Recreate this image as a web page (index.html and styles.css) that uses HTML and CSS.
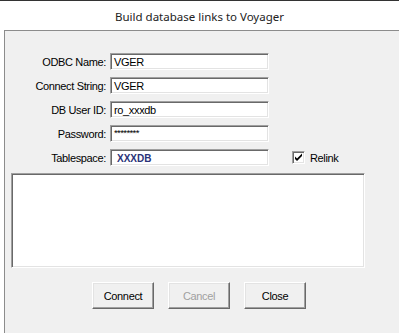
FILE: index.html
```html
<!DOCTYPE html>
<html lang="en">
<head>
    <meta charset="UTF-8">
    <title>Build database links to Voyager</title>
    <link rel="stylesheet" href="styles.css">
</head>
<body>
    <header class="titulo">Build database links to Voyager</header>
    <main class="dialogo">
        <section class="campos">
            <label class="etiqueta">ODBC Name:</label>
            <div class="caja">VGER</div>
            <span></span>
            <label class="etiqueta">Connect String:</label>
            <div class="caja">VGER</div>
            <span></span>
            <label class="etiqueta">DB User ID:</label>
            <div class="caja">ro_xxxdb</div>
            <span></span>
            <label class="etiqueta">Password:</label>
            <div class="caja clave">********</div>
            <span></span>
            <label class="etiqueta">Tablespace:</label>
            <div class="caja espacio">XXXDB</div>
            <label class="casilla">
                <span class="marca">
                    <svg width="9" height="9" viewBox="0 0 9 9">
                        <path d="M1 3.5 L3 5.5 L8 0.5 L8 3 L3 8 L1 6 Z" fill="#000"/>
                    </svg>
                </span>
                Relink
            </label>
        </section>
        <div class="registro"></div>
        <section class="botones">
            <button>Connect</button>
            <button class="inactivo">Cancel</button>
            <button>Close</button>
        </section>
    </main>
</body>
</html>
```

FILE: styles.css
```css
body {
    margin: 0;
    width: 399px;
    height: 333px;
    overflow: hidden;
    background-color: #fff;
    border-top: 1px solid #333;
    box-sizing: border-box;
    font-family: "Liberation Sans", Arial, sans-serif;
    font-size: 11px;
    letter-spacing: -0.35px;
    color: #000;
}
.titulo {
    height: 29px;
    line-height: 31px;
    text-align: center;
    font-family: "Noto Sans", sans-serif;
    font-size: 11.5px;
    letter-spacing: 0;
    color: #222;
}
.dialogo {
    margin-left: 4px;
    height: 303px;
    background-color: #f0f0f0;
    border-top: 1px solid #8c8c8c;
    border-left: 1px solid #8c8c8c;
}
.campos {
    display: grid;
    grid-template-columns: 101px 159px auto;
    grid-auto-rows: 17px;
    column-gap: 4px;
    row-gap: 7px;
    align-items: center;
    padding-top: 22px;
}
.etiqueta {
    text-align: right;
}
.caja {
    height: 17px;
    box-sizing: border-box;
    background-color: #fff;
    border: 1px solid;
    border-color: #a0a0a0 #fff #fff #a0a0a0;
    box-shadow: inset 1px 1px 0 #696969, inset -1px -1px 0 #e3e3e3;
    padding: 1px 3px 0;
    line-height: 14px;
}
.clave {
    font-size: 9.5px;
    letter-spacing: -0.6px;
    line-height: 12px;
}
.espacio {
    font-size: 10px;
    font-weight: bold;
    letter-spacing: 0;
    color: #2a3378;
    padding-left: 6px;
    padding-top: 3px;
    line-height: 12px;
}
.casilla {
    display: flex;
    align-items: center;
    gap: 5px;
    margin-left: 19px;
}
.marca {
    display: flex;
    align-items: center;
    justify-content: center;
    width: 13px;
    height: 13px;
    box-sizing: border-box;
    background-color: #fff;
    border: 1px solid;
    border-color: #a0a0a0 #fff #fff #a0a0a0;
    box-shadow: inset 1px 1px 0 #696969, inset -1px -1px 0 #e3e3e3;
}
.registro {
    margin: 7px 0 0 6px;
    width: 354px;
    height: 95px;
    box-sizing: border-box;
    background-color: #fff;
    border: 1px solid;
    border-color: #a0a0a0 #fff #fff #a0a0a0;
    box-shadow: inset 1px 1px 0 #696969, inset -1px -1px 0 #e3e3e3;
}
.botones {
    display: flex;
    gap: 14px;
    padding: 14px 0 0 87px;
}
button {
    width: 62px;
    height: 27px;
    margin: 0;
    padding: 0;
    background-color: #f0f0f0;
    font-family: "Liberation Sans", Arial, sans-serif;
    font-size: 11px;
    letter-spacing: -0.35px;
    color: #000;
    border: 1px solid;
    border-color: #fff #696969 #696969 #fff;
    box-shadow: inset -1px -1px 0 #a0a0a0, inset 1px 1px 0 #e3e3e3;
}
.inactivo {
    color: #a0a0a0;
}
```
